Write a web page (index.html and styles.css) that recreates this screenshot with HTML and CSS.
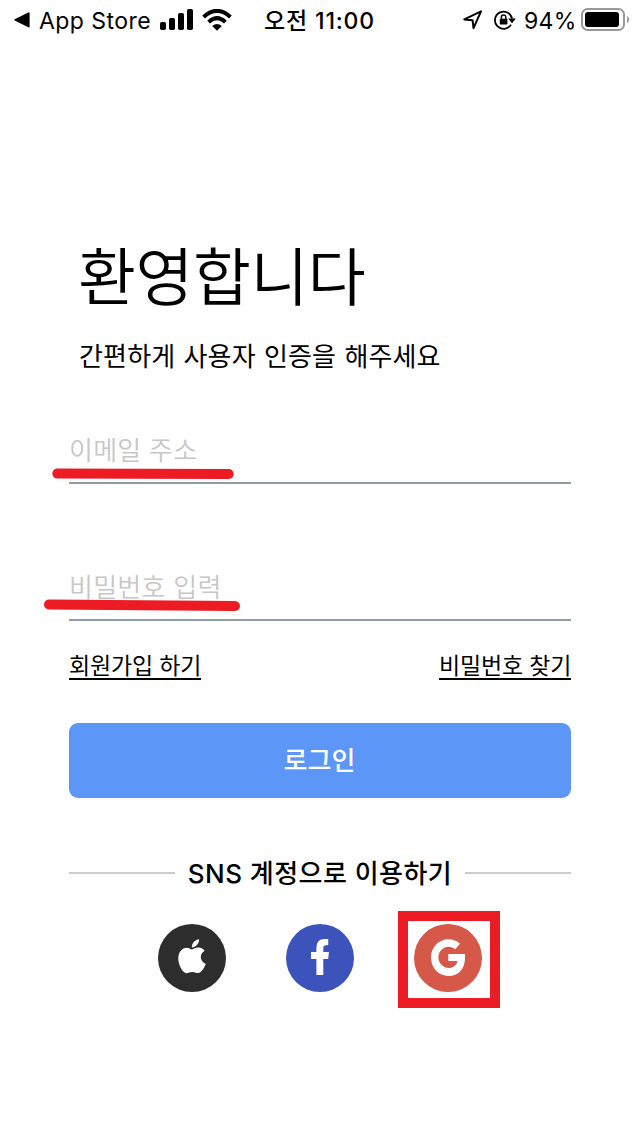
FILE: index.html
```html
<!DOCTYPE html>
<html lang="ko">
<head>
<meta charset="utf-8">
<title>로그인</title>
<link rel="stylesheet" href="styles.css">
</head>
<body>
<div class="screen">
  <header class="status">
    <div class="status-left">
      <svg width="16" height="16" viewBox="0 0 16 16"><path d="M.7 7.2 14.3.5Q15.6 0 15.6 1.4V14.4Q15.6 15.8 14.3 15.2L.7 8.5Q-.2 7.8.7 7.2Z"/></svg>
      <span class="back-label">App Store</span>
      <svg class="signal" width="34" height="22" viewBox="0 0 34 22"><rect x="0" y="13" width="6" height="8" rx="1.7"/><rect x="9" y="9" width="6" height="12" rx="1.7"/><rect x="18" y="4" width="6" height="17" rx="1.7"/><rect x="27" y="0" width="6" height="21" rx="1.7"/></svg>
      <svg class="wifi" width="30" height="22" viewBox="0 0 30 22"><g fill="none" stroke="#000" stroke-width="4"><path d="M1.6 8Q15-4.2 28.4 8"/><path d="M6.6 13.1Q15 5.2 23.4 13.1"/></g><path d="M10.2 17.1Q15 13 19.8 17.1L15 21.8Z"/></svg>
    </div>
    <div class="time">오전 11:00</div>
    <div class="status-right">
      <svg class="locate" width="20" height="20" viewBox="0 0 20 20"><path d="M1.3 9.4 18 1.4 10.5 18.2 9.6 10.3Z" fill="none" stroke="#000" stroke-width="2" stroke-linejoin="round"/></svg>
      <svg class="lock" width="22" height="20" viewBox="0 0 22 20"><path d="M17 14.6A8.6 8.6 0 1 1 18 8.6" fill="none" stroke="#000" stroke-width="1.8"/><path d="M14.2 8.4H21.8L18 13.2Z"/><rect x="5.8" y="8.8" width="7.6" height="5.8" rx=".8"/><path d="M7.4 9V7Q7.4 5 9.6 5T11.8 7V9" fill="none" stroke="#000" stroke-width="1.5"/></svg>
      <span class="percent">94%</span>
      <svg class="battery" width="50" height="24" viewBox="0 0 50 24"><rect x="1" y="1" width="42" height="21" rx="5.5" fill="none" stroke="#999" stroke-width="2"/><rect x="4" y="4" width="34" height="15" rx="3"/><path d="M46 8Q48.3 9 48.3 11.5T46 15Z" fill="#999"/></svg>
    </div>
  </header>

  <main class="content">
    <h1 class="title">환영합니다</h1>
    <p class="subtitle">간편하게 사용자 인증을 해주세요</p>
    <div class="field email"><span>이메일 주소</span></div>
    <div class="field password"><span>비밀번호 입력</span></div>
    <nav class="links"><a class="link">회원가입 하기</a><a class="link">비밀번호 찾기</a></nav>
    <button class="login">로그인</button>
    <div class="divider"><span>SNS 계정으로 이용하기</span></div>
    <div class="social">
      <svg width="68" height="68" viewBox="0 0 68 68"><circle cx="34" cy="34" r="34" fill="#2d2d2d"/><path fill="#fff" d="M41 15.2C41.4 19.3 38 23.2 33.9 23.5 33.4 19.6 37.1 15.7 41 15.2ZM33.8 25.5C35.3 25.5 37.1 23.5 40.4 23.6 43.2 23.7 45.5 25 46.6 26.8 41 30.1 41.8 37.6 47.8 40 46.6 43.3 43.3 49 40.2 49.1 37.9 49.2 37 47.9 34.3 47.9S30.6 49.1 28.5 49.2C25 49.3 20.4 41.6 20.3 34.8 20.2 27.7 24.5 23.9 28.5 23.8 30.9 23.8 32.7 25.5 33.8 25.5Z"/></svg>
      <svg width="68" height="68" viewBox="0 0 68 68"><circle cx="34" cy="34" r="34" fill="#3b53ba"/><path fill="#fff" d="M30.4 51V34.9H25V28.1H30.4V24Q30.4 15 38.4 15H42.2V21.2H39.9Q37.3 21.2 37.3 24V28.1H42.9L42.2 34.9H37.3V51Z"/></svg>
      <div class="google">
        <svg width="68" height="68" viewBox="0 0 68 68"><circle cx="34" cy="34" r="34" fill="#d55848"/><path fill="#fff" d="M34.3 30H51V34C51 44.7 44.5 52 34.5 52 24.6 52 17 44.2 17 33.6S24.7 15.2 34.5 15.2C39 15.2 43 16.9 46 19.7L41.3 25.3C35 19.5 24.4 23.6 24.4 33.6 24.4 43.6 37.6 48 42.8 39.6L43.4 36.9H34.3Z"/></svg>
      </div>
    </div>
  </main>
  <svg class="marks" width="640" height="1136" viewBox="0 0 640 1136"><g stroke="#ed1c24" stroke-width="10" stroke-linecap="round"><path d="M57.3 473.6 228.7 474"/><path d="M49 604.5 235 606"/></g></svg>
</div>
</body>
</html>
```
FILE: styles.css
```css
* { box-sizing: border-box; }
body { margin: 0; background: #fff; }
.screen {
  position: relative;
  width: 640px;
  height: 1136px;
  overflow: hidden;
  color: #000;
  font-family: "Noto Sans CJK KR", sans-serif;
}
svg { display: block; flex: none; }
.status {
  display: grid;
  grid-template-columns: 264px 1fr 178px;
  height: 40px;
  font-family: Inter, "Noto Sans CJK KR", sans-serif;
  font-size: 23px;
  line-height: 42px;
  white-space: nowrap;
}
.status-left, .status-right { display: flex; align-items: center; height: 40px; }
.status-left { padding-left: 14px; }
.back-label { width: 112px; margin-left: 9px; letter-spacing: .45px; }
.back-label, .percent { padding-top: 1px; }
.signal { margin-left: 9px; }
.wifi { margin-left: 8px; }
.time { font-weight: 500; letter-spacing: .85px; font-size: 23px; }
.status-right { padding-left: 1px; }
.lock { margin-left: 11px; }
.percent { width: 51px; margin-left: 8px; letter-spacing: .3px; }
.battery { margin-left: 6px; }
.content { padding: 0 69px; }
.title {
  margin: 188px 0 0;
  padding-left: 9px;
  height: 92px;
  font-size: 63px;
  font-weight: 350;
  line-height: 90px;
  letter-spacing: -.5px;
}
.subtitle {
  margin: 15px 0 0;
  padding-left: 10px;
  height: 41px;
  font-size: 26px;
  line-height: 40px;
  letter-spacing: .15px;
  word-spacing: .8px;
}
.field {
  border-bottom: 2px solid #8e9bab;
  color: #c7c7c7;
  font-size: 26px;
  font-weight: 350;
  line-height: 41px;
  letter-spacing: .25px;
}
.email { height: 56px; margin-top: 52px; }
.password { height: 56px; margin-top: 81px; }
.links { display: flex; justify-content: space-between; margin-top: 29px; }
.link {
  width: 132px;
  height: 30px;
  border-bottom: 2px solid #000;
  font-size: 23px;
  line-height: 28px;
  letter-spacing: -.15px;
  white-space: nowrap;
}
.login {
  display: block;
  width: 100%;
  height: 75px;
  margin-top: 43px;
  padding: 0 1px 3px 0;
  border: 0;
  border-radius: 9px;
  background: #5c97f8;
  color: #fff;
  font: 500 26px/72px "Noto Sans CJK KR", sans-serif;
}
.divider {
  display: flex;
  align-items: center;
  height: 40px;
  margin-top: 55px;
  gap: 13px;
  font-family: Inter, "Noto Sans CJK KR", sans-serif;
  font-size: 26px;
  font-weight: 500;
  line-height: 40px;
  letter-spacing: .46px;
  white-space: nowrap;
}
.divider span { padding-top: 1px; }
.divider::before, .divider::after { content: ""; flex: 1; height: 2px; background: #ccc; }
.social { display: flex; gap: 60px; padding-left: 89px; margin-top: 31px; }
.google {
  width: 102px;
  height: 97px;
  margin: -13px 0 0 -16px;
  padding: 3px 6px;
  border: 10px solid #ed1c24;
}
.marks { position: absolute; left: 0; top: 0; }
```
